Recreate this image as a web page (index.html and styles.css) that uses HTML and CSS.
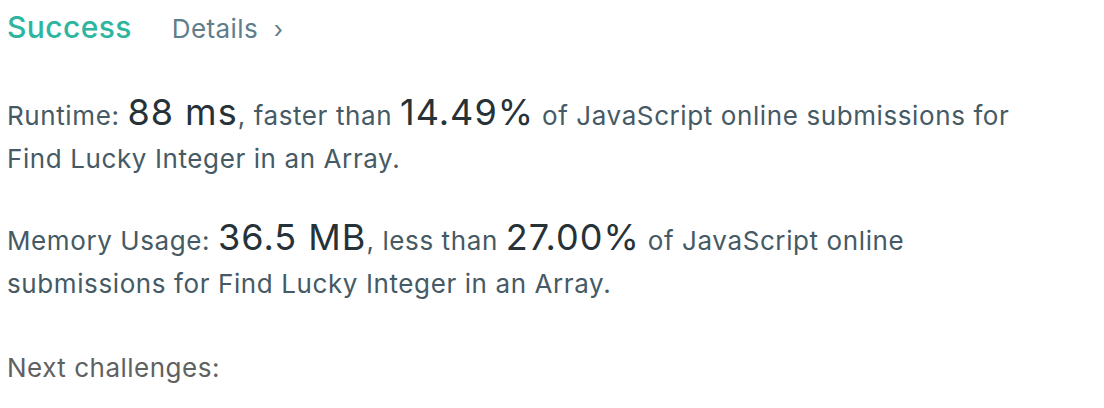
FILE: index.html
```html
<!DOCTYPE html>
<html>
<head>
<meta charset="utf-8">
<link rel="stylesheet" href="styles.css">
</head>
<body>
<div class="page">
  <div class="header">
    <span class="status">Success</span>
    <a class="details">Details <span class="chev">›</span></a>
  </div>
  <p class="stat">Runtime: <span class="big">88 ms</span>, faster than <span class="big">14.49%</span> of JavaScript online submissions for Find Lucky Integer in an Array.</p>
  <p class="stat">Memory Usage: <span class="big">36.5 MB</span>, less than <span class="big">27.00%</span> of JavaScript online submissions for Find Lucky Integer in an Array.</p>
  <p class="next">Next challenges:</p>
</div>
</body>
</html>
```
FILE: styles.css
```css
html, body { margin: 0; padding: 0; background: #fff; }
body { font-family: Inter, "Noto Sans", sans-serif; }
.page { padding: 9px 7px; width: 1030px; }
.header { display: flex; align-items: baseline; gap: 40px; height: 42px; }
.status { color: #2db5a0; font-size: 30px; font-weight: 500; letter-spacing: 0.4px; }
.details { color: #607d8b; font-size: 26px; letter-spacing: 0.4px; }
.chev { margin-left: 8px; font-size: 24px; }
.stat { color: #455a64; font-size: 26px; letter-spacing: 0.6px; line-height: 43px; margin: 43px 0 0; }
.stat + .stat { margin-top: 39px; }
.big { color: #263238; font-size: 36px; letter-spacing: 1px; line-height: 30px; }
.next { color: #616161; font-size: 26px; letter-spacing: 0.5px; line-height: 43px; margin: 41px 0 0; }
```
